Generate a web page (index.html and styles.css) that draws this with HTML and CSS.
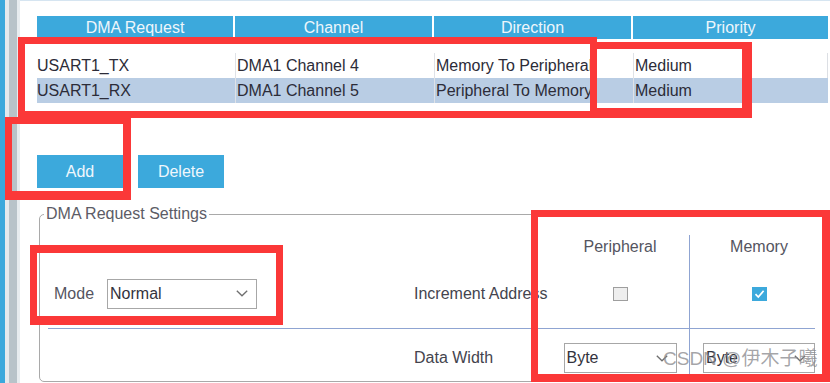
FILE: index.html
```html
<!DOCTYPE html>
<html>
<head>
<meta charset="utf-8">
<link rel="stylesheet" href="styles.css">
</head>
<body>
<div class="app">
  <div class="rail">
    <span class="rail-blue"></span><span class="rail-gap"></span><span class="rail-gray"></span><span class="rail-edge"></span>
  </div>
  <div class="main">
    <div class="table">
      <div class="thead">
        <div class="th">DMA Request</div>
        <div class="th">Channel</div>
        <div class="th">Direction</div>
        <div class="th">Priority</div>
      </div>
      <div class="tbody">
        <div class="tr">
          <div class="td">USART1_TX</div>
          <div class="td">DMA1 Channel 4</div>
          <div class="td">Memory To Peripheral</div>
          <div class="td">Medium</div>
        </div>
        <div class="tr selected">
          <div class="td">USART1_RX</div>
          <div class="td">DMA1 Channel 5</div>
          <div class="td">Peripheral To Memory</div>
          <div class="td">Medium</div>
        </div>
      </div>
    </div>
    <div class="buttons">
      <button class="btn">Add</button>
      <button class="btn">Delete</button>
    </div>
    <fieldset class="settings">
      <legend class="legend">DMA Request Settings</legend>
      <div class="grid">
        <div class="cell"></div>
        <div class="cell"></div>
        <div class="cell col-head">Peripheral</div>
        <div class="cell col-head col-mem">Memory</div>

        <div class="cell mode-cell">
          <span class="label">Mode</span>
          <div class="select mode-select"><span>Normal</span>
            <svg class="chev" width="12" height="7" viewBox="0 0 12 7"><path d="M0.8 0.8 L6 5.8 L11.2 0.8" fill="none" stroke="#6f6f6f" stroke-width="1.3"/></svg>
          </div>
        </div>
        <div class="cell row-label">Increment Address</div>
        <div class="cell center"><span class="check"></span></div>
        <div class="cell center col-mem"><span class="check checked"><svg width="15" height="14" viewBox="0 0 15 14"><path d="M3.5 7.2 L6.3 10 L11.6 3.8" fill="none" stroke="#ffffff" stroke-width="1.7"/></svg></span></div>

        <div class="divider"></div>

        <div class="cell"></div>
        <div class="cell row-label top">Data Width</div>
        <div class="cell center top"><div class="select byte-select"><span>Byte</span>
            <svg class="chev" width="12" height="7" viewBox="0 0 12 7"><path d="M0.8 0.8 L6 5.8 L11.2 0.8" fill="none" stroke="#6f6f6f" stroke-width="1.3"/></svg></div></div>
        <div class="cell center top col-mem"><div class="select byte-select mem"><span>Byte</span>
            <svg class="chev" width="12" height="7" viewBox="0 0 12 7"><path d="M0.8 0.8 L6 5.8 L11.2 0.8" fill="none" stroke="#6f6f6f" stroke-width="1.3"/></svg></div></div>
      </div>
    </fieldset>
  </div>

  <div class="mark mark-rows"></div>
  <div class="mark mark-priority"></div>
  <div class="mark mark-add"></div>
  <div class="mark mark-mode"></div>
  <div class="mark mark-matrix"></div>
  <div class="watermark">CSDN @伊木子曦</div>
</div>
</body>
</html>
```

FILE: styles.css
```css
* { box-sizing: border-box; }
html, body { margin: 0; padding: 0; background: #ffffff; }
body {
  font-family: "Liberation Sans", Arial, sans-serif;
  font-size: 16px;
  color: #2c2c38;
}
.app {
  position: relative;
  width: 830px;
  height: 383px;
  overflow: hidden;
  display: flex;
  background: #ffffff;
}
.rail { display: flex; flex: none; height: 100%; }
.rail-blue { width: 5px; background: #3aa8dc; }
.rail-gap { width: 4px; background: #e3e9ed; }
.rail-gray { width: 8px; background: #b8c3c9; }
.rail-edge { width: 3px; background: #e7ecef; }

.main {
  flex: 1;
  border-top: 1px solid #d6e5f1;
  padding: 15px 0 0 17px;
}

/* table */
.thead, .tr {
  display: grid;
  grid-template-columns: 196px 197px 197px 195px;
  column-gap: 2px;
  width: 791px;
}
.th {
  height: 23px;
  line-height: 23px;
  background: #3ca9dc;
  color: #eef6fb;
  text-align: center;
  white-space: nowrap;
}
.tbody {
  margin-top: 14px;
  width: 791px;
  border-right: 1px solid #dcdfe4;
}
.tr { height: 25px; }
.tr.selected { background: #b9cde4; }
.td {
  line-height: 25px;
  white-space: nowrap;
  overflow: hidden;
  padding-left: 1px;
}
.td + .td { border-left: 1px solid #dfe2e7; }
.td:first-child { padding-left: 0; }

/* buttons */
.buttons {
  display: flex;
  gap: 15px;
  margin-top: 52px;
}
.btn {
  width: 86px;
  height: 33px;
  border: none;
  background: #3ca9dc;
  color: #eff7fc;
  font-family: "Liberation Sans", Arial, sans-serif;
  font-size: 16px;
  padding: 0;
}

/* settings fieldset */
.settings {
  margin: 17px 0 0 2px;
  width: 790px;
  height: 177px;
  padding: 0;
  border: 1px solid #a9a9a9;
  border-radius: 5px;
}
.legend {
  margin-left: 4px;
  padding: 0 2px;
  line-height: 18px;
  color: #5c5c66;
}
.grid {
  margin: 12px 0 0 8px;
  width: 780px;
  display: grid;
  grid-template-columns: 366px 137px 138px 139px;
  grid-template-rows: 24px 69px 1px 51px;
}
.cell {
  display: flex;
  align-items: center;
  white-space: nowrap;
}
.cell.top { align-items: flex-start; padding-top: 14px; }
.col-head { justify-content: center; color: #55555f; }
.col-mem { border-left: 1px solid #8fa4d2; }
.center { justify-content: center; }
.mode-cell { padding-left: 6px; gap: 13px; }
.label { color: #55555f; }
.row-label { color: #44444e; }
.row-label.top { height: 44px; padding-top: 14px; line-height: 30px; }

.select {
  height: 30px;
  border: 1px solid #a7a7a7;
  background: #ffffff;
  display: flex;
  align-items: center;
  justify-content: space-between;
  padding: 0 8px 0 2px;
  color: #33333d;
}
.mode-select { width: 150px; }
.byte-select { width: 113px; }
.byte-select.mem { width: 112px; }
.chev { display: block; }

.check {
  width: 15px;
  height: 14px;
  border: 1px solid #9e9e9e;
  background: #eeeeee;
  display: block;
}
.check.checked {
  border: none;
  background: #3ca9dc;
}
.check svg { display: block; }

.divider {
  grid-column: 1 / -1;
  width: 767px;
  height: 1px;
  background: #8fa4d2;
}

/* red annotation boxes over the screenshot */
.mark {
  position: absolute;
  border: 7px solid #fb3838;
}
.mark-rows { left: 18px; top: 37px; width: 579px; height: 81px; }
.mark-priority { left: 590px; top: 42px; width: 162px; height: 76px; border-width: 7px 10px 10px 7px; }
.mark-add { left: 5px; top: 117px; width: 126px; height: 83px; border-width: 7px 8px 9px 7px; }
.mark-mode { left: 30px; top: 245px; width: 253px; height: 80px; border-width: 8px 7px 9px 7px; }
.mark-matrix { left: 531px; top: 210px; width: 299px; height: 172px; border-width: 7px 8px 8px 7px; }

.watermark {
  position: absolute;
  left: 663px;
  top: 348px;
  font-family: "Liberation Sans", "Noto Sans CJK SC", sans-serif;
  font-size: 19px;
  line-height: 22px;
  color: rgba(135, 135, 140, 0.75);
  white-space: nowrap;
}
```
